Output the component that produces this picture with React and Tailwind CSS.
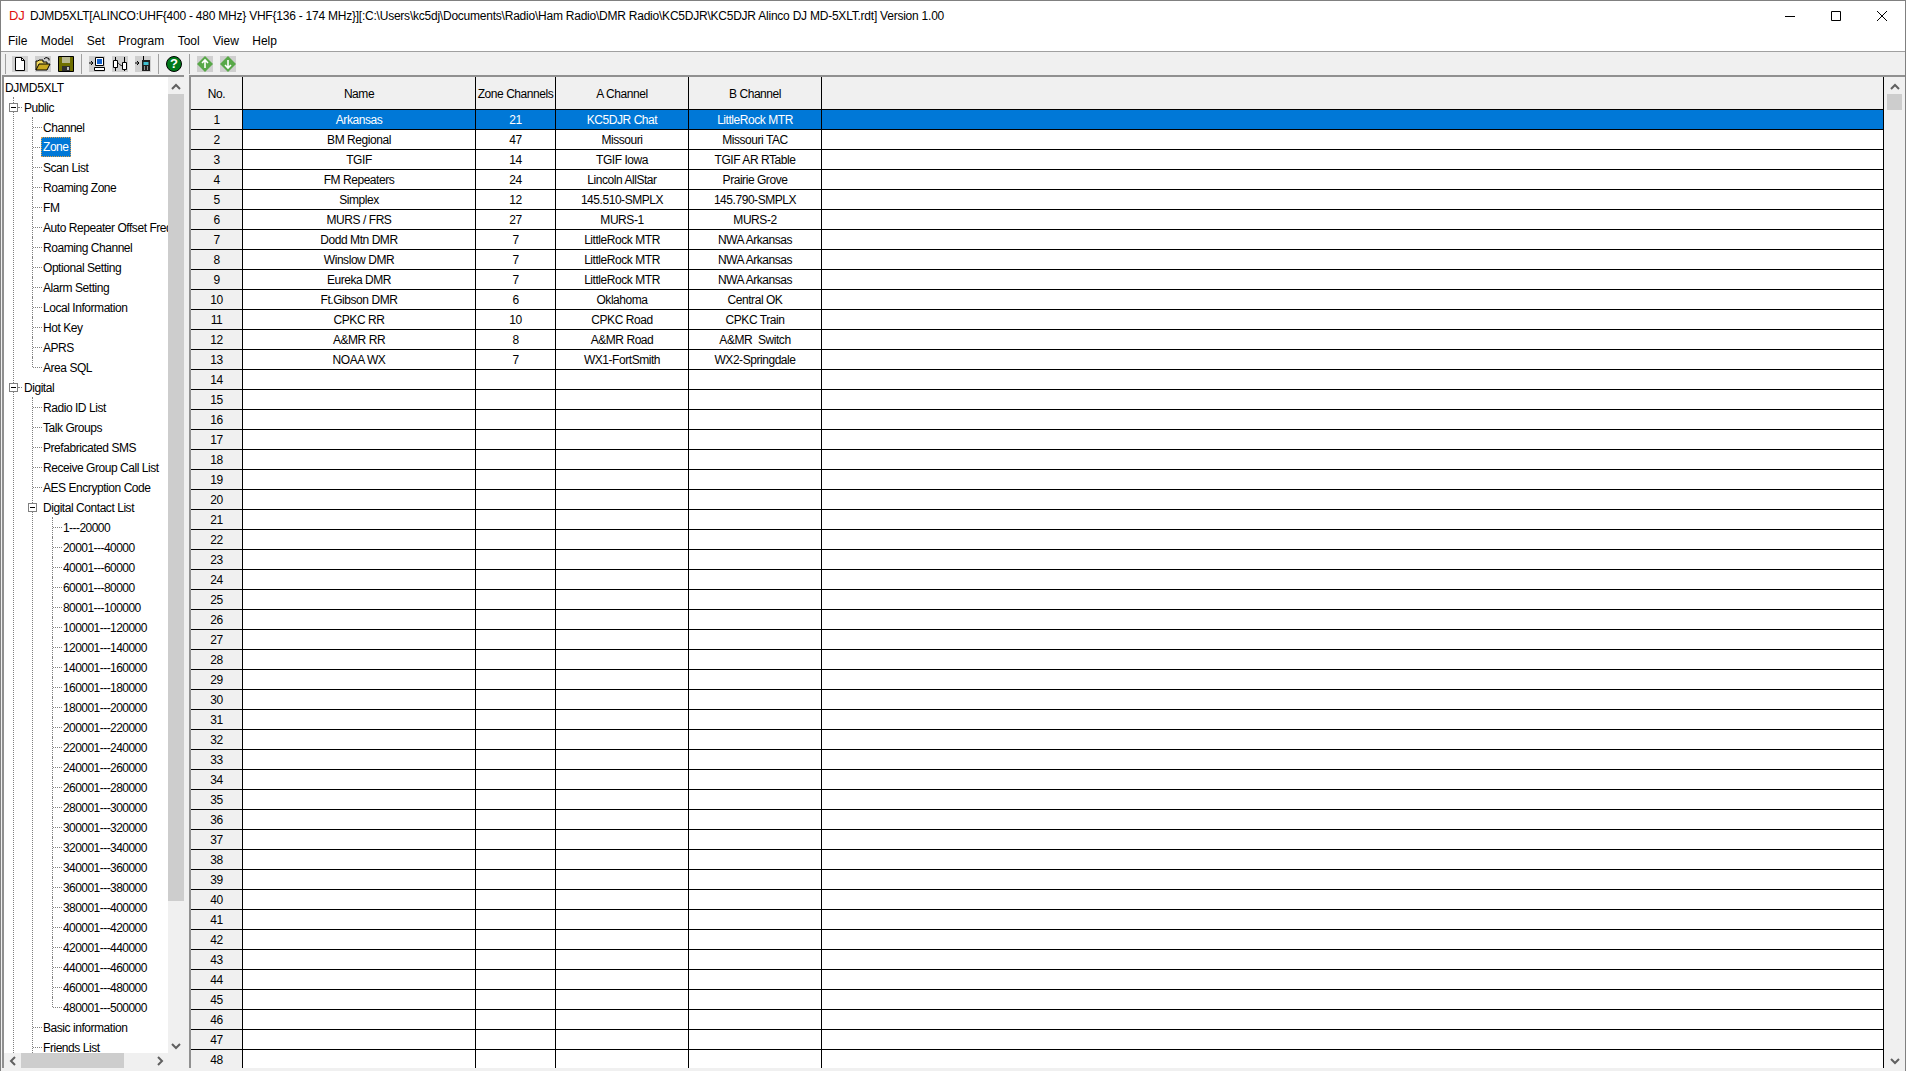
const zones = [
  ['Arkansas', '21', 'KC5DJR Chat', 'LittleRock MTR'],
  ['BM Regional', '47', 'Missouri', 'Missouri TAC'],
  ['TGIF', '14', 'TGIF Iowa', 'TGIF AR RTable'],
  ['FM Repeaters', '24', 'Lincoln AllStar', 'Prairie Grove'],
  ['Simplex', '12', '145.510-SMPLX', '145.790-SMPLX'],
  ['MURS / FRS', '27', 'MURS-1', 'MURS-2'],
  ['Dodd Mtn DMR', '7', 'LittleRock MTR', 'NWA Arkansas'],
  ['Winslow DMR', '7', 'LittleRock MTR', 'NWA Arkansas'],
  ['Eureka DMR', '7', 'LittleRock MTR', 'NWA Arkansas'],
  ['Ft.Gibson DMR', '6', 'Oklahoma', 'Central OK'],
  ['CPKC RR', '10', 'CPKC Road', 'CPKC Train'],
  ['A&MR RR', '8', 'A&MR Road', 'A&MR  Switch'],
  ['NOAA WX', '7', 'WX1-FortSmith', 'WX2-Springdale'],
]

const rows = Array.from({ length: 48 }, (_, i) => zones[i] || ['', '', '', ''])

const publicItems = ['Channel', 'Zone', 'Scan List', 'Roaming Zone', 'FM', 'Auto Repeater Offset Freq', 'Roaming Channel', 'Optional Setting', 'Alarm Setting', 'Local Information', 'Hot Key', 'APRS', 'Area SQL']
const digitalItems = ['Radio ID List', 'Talk Groups', 'Prefabricated SMS', 'Receive Group Call List', 'AES Encryption Code']
const contactRanges = ['1---20000', '20001---40000', '40001---60000', '60001---80000', '80001---100000', '100001---120000', '120001---140000', '140001---160000', '160001---180000', '180001---200000', '200001---220000', '220001---240000', '240001---260000', '260001---280000', '280001---300000', '300001---320000', '320001---340000', '340001---360000', '360001---380000', '380001---400000', '400001---420000', '420001---440000', '440001---460000', '460001---480000', '480001---500000']

const Expander = () => (
  <span className="w-[9px] h-[9px] border border-[#808080] bg-white flex items-center justify-center shrink-0">
    <span className="w-[5px] h-px bg-black" />
  </span>
)

// line: the leaf draws its own bit of the vertical tree line, last = only down to the middle
const Leaf = ({ label, selected, line, last, tight }) => (
  <div className="h-5 flex items-center whitespace-nowrap">
    {line && <span className={`w-0 border-l border-dotted border-[#808080] self-start shrink-0 ${last ? 'h-[10px]' : 'h-5'}`} />}
    <span className="w-[9px] border-t border-dotted border-[#808080] mr-px shrink-0" />
    {selected
      ? <span className="bg-[#0078d7] text-white px-[2px] pt-px -ml-[2px] h-5 leading-[19px] outline-1 -outline-offset-1 outline-dotted outline-[#d9a050]">{label}</span>
      : <span className={`pt-px ${tight ? 'tracking-[-0.55px]' : ''}`}>{label}</span>}
  </div>
)

const Chevron = ({ dir }) => {
  const pts = { up: '1,7 5,3 9,7', down: '1,3 5,7 9,3', left: '7,1 3,5 7,9', right: '3,1 7,5 3,9' }
  return (
    <svg width="10" height="10" viewBox="0 0 10 10" className={dir === 'up' || dir === 'down' ? 'mt-0.5' : ''}>
      <polyline points={pts[dir]} fill="none" stroke="#606060" strokeWidth="2" />
    </svg>
  )
}

const Sep = () => <span className="w-px h-[20px] bg-[#a0a0a0] mr-[7px] shrink-0" />

const ToolBtn = ({ children }) => (
  <span className="w-4 h-4 mr-[7px] flex items-center justify-center shrink-0 bg-[#cfcfcf]">{children}</span>
)

const NewIcon = () => (
  <svg width="16" height="16" viewBox="0 0 16 16"><path d="M3.5 1.5h6l3 3v10h-9z" fill="#fff" stroke="#000" /><path d="M9.5 1.5v3h3" fill="none" stroke="#000" /></svg>
)
const OpenIcon = () => (
  <svg width="16" height="16" viewBox="0 0 16 16"><path d="M1 14V5h2l1-1h4v2h4v2" fill="#f0d860" stroke="#000" /><path d="M1 14l3-6h11l-3 6z" fill="#c8a820" stroke="#000" /><path d="M9 3l2-1.5 3 1v2" fill="none" stroke="#000" /></svg>
)
const SaveIcon = () => (
  <svg width="16" height="16" viewBox="0 0 16 16"><path d="M.5.5h15v15H.5z" fill="#707000" stroke="#000" /><path d="M4 1h8v6H4z" fill="#b8b890" /><path d="M4 10h8v5H4z" fill="#303030" /><path d="M9 11h2v3H9z" fill="#c0c0c0" /></svg>
)
const ReadIcon = () => (
  <svg width="16" height="16" viewBox="0 0 16 16"><path d="M0 7h3M2 5l2 2-2 2" fill="none" stroke="#000" /><path d="M6.5 1.5h8v8h-8z" fill="#fff" stroke="#000" /><path d="M8 3h5v5H8z" fill="#1060d0" /><path d="M5.5 11.5h10v3h-10z" fill="#fff" stroke="#000" /></svg>
)
const LinkIcon = () => (
  <svg width="16" height="16" viewBox="0 0 16 16"><path d="M1.5 4.5h4v7h-4zM10.5 6.5h4v7h-4z" fill="#fff" stroke="#000" /><path d="M3.5 1v3M3.5 11v4M12.5 1v5M12.5 13v2M5.5 7c2 0 3 4 5 2" fill="none" stroke="#000" /></svg>
)
const RadioIcon = () => (
  <svg width="16" height="16" viewBox="0 0 16 16"><path d="M0 7h3M2 5l2 2-2 2" fill="none" stroke="#000" /><path d="M8.5 0v4" stroke="#000" /><path d="M7 4h8v11H7z" fill="#202020" /><path d="M8.5 6h5v3h-5z" fill="#40c0d0" /><path d="M9 11h1M12 11h1M9 13h1M12 13h1" stroke="#fff" /></svg>
)
const HelpIcon = () => (
  <span className="w-4 h-4 rounded-full bg-[#007a1a] border border-black text-white text-[13px] leading-[14px] font-bold text-center tracking-normal">?</span>
)
const ArrowIcon = ({ d }) => (
  <svg width="16" height="16" viewBox="0 0 16 16">
    <path d="M8 0l8 8-8 8-8-8z" fill="#58a848" />
    <path d={d} fill="none" stroke="#fff" strokeWidth="1.6" />
  </svg>
)

const Cell = ({ w, children, className = '' }) => (
  <div className={`${w} shrink-0 h-full pt-px border-r border-black flex items-center justify-center whitespace-pre ${className}`}>{children}</div>
)

export default function App() {
  return (
    <div className="w-[1906px] h-[1071px] overflow-hidden bg-[#f0f0f0] flex flex-col text-[12px] text-black font-['Liberation_Sans',sans-serif] tracking-[-0.45px] border-x border-t border-[#808080]">
      {/* title bar */}
      <div className="h-[30px] bg-white flex items-center shrink-0 tracking-[-0.23px]">
        <span className="ml-[8px] w-[21px] text-[#e01010] text-[13px]">DJ</span>
        <span className="whitespace-nowrap">DJMD5XLT[ALINCO:UHF{'{'}400 - 480 MHz{'}'} VHF{'{'}136 - 174 MHz{'}'}][:C:\Users\kc5dj\Documents\Radio\Ham Radio\DMR Radio\KC5DJR\KC5DJR Alinco DJ MD-5XLT.rdt] Version 1.00</span>
        <div className="ml-auto flex items-center">
          <span className="w-[46px] flex justify-center"><svg width="10" height="10" viewBox="0 0 10 10"><path d="M0 5.5h10" stroke="#000" /></svg></span>
          <span className="w-[46px] flex justify-center"><svg width="10" height="10" viewBox="0 0 10 10"><path d="M.5.5h9v9h-9z" fill="none" stroke="#000" /></svg></span>
          <span className="w-[46px] flex justify-center"><svg width="10" height="10" viewBox="0 0 10 10"><path d="M0 0l10 10M10 0L0 10" stroke="#000" /></svg></span>
        </div>
      </div>
      {/* menu */}
      <div className="h-[21px] bg-white flex items-center gap-[13.4px] pl-[7px] shrink-0 border-b border-[#a0a0a0] tracking-normal">
        {['File', 'Model', 'Set', 'Program', 'Tool', 'View', 'Help'].map((m) => <span key={m}>{m}</span>)}
      </div>
      {/* toolbar */}
      <div className="h-[23px] flex items-center pl-[4px] pt-px shrink-0">
        <span className="w-px h-[20px] bg-[#a0a0a0] mr-[6px]" />
        <ToolBtn><NewIcon /></ToolBtn>
        <ToolBtn><OpenIcon /></ToolBtn>
        <ToolBtn><SaveIcon /></ToolBtn>
        <Sep />
        <ToolBtn><ReadIcon /></ToolBtn>
        <ToolBtn><LinkIcon /></ToolBtn>
        <ToolBtn><RadioIcon /></ToolBtn>
        <Sep />
        <span className="mr-[7px] flex"><HelpIcon /></span>
        <Sep />
        <ToolBtn><ArrowIcon d="M8 12V4M5 7l3-3 3 3" /></ToolBtn>
        <ToolBtn><ArrowIcon d="M8 4v8M5 9l3 3 3-3" /></ToolBtn>
      </div>
      <div className="flex-1 min-h-0 flex pb-[3px]">
        {/* tree */}
        <div className="w-[182px] shrink-0 ml-px border-l-2 border-t-2 border-[#909090] flex flex-col bg-white">
          <div className="flex-1 min-h-0 flex">
            <div className="flex-1 min-w-0 overflow-hidden pl-px">
              <div className="h-5 pt-px flex items-center tracking-[-0.3px]">DJMD5XLT</div>
              <div className="ml-[8px] border-l border-dotted border-[#808080]">
                <div className="h-5 flex items-center -ml-[5px]"><Expander /><span className="w-[4px] border-t border-dotted border-[#808080] mr-[2px]" /><span className="pt-px">Public</span></div>
                <div className="ml-[18px]">
                  {publicItems.map((t, i) => <Leaf key={t} label={t} line last={i === publicItems.length - 1} selected={t === 'Zone'} />)}
                </div>
                <div className="h-5 flex items-center -ml-[5px]"><Expander /><span className="w-[4px] border-t border-dotted border-[#808080] mr-[2px]" /><span className="pt-px">Digital</span></div>
                <div className="ml-[18px] border-l border-dotted border-[#808080]">
                  {digitalItems.map((t) => <Leaf key={t} label={t} />)}
                  <div className="h-5 flex items-center -ml-[5px]"><Expander /><span className="ml-[6px] pt-px whitespace-nowrap">Digital Contact List</span></div>
                  <div className="ml-[19px]">
                    {contactRanges.map((t, i) => <Leaf key={t} label={t} line tight last={i === contactRanges.length - 1} />)}
                  </div>
                  <Leaf label="Basic information" />
                  <Leaf label="Friends List" />
                </div>
              </div>
            </div>
            <div className="w-4 shrink-0 bg-[#f0f0f0] flex flex-col items-center">
              <span className="h-[17px] flex items-center shrink-0"><Chevron dir="up" /></span>
              <div className="flex-1 min-h-0 w-full"><div className="h-[807px] w-full bg-[#cdcdcd]" /></div>
              <span className="h-[17px] flex items-center shrink-0"><Chevron dir="down" /></span>
            </div>
          </div>
          <div className="h-[15px] shrink-0 bg-[#f0f0f0] flex items-center">
            <span className="w-[17px] flex justify-center"><Chevron dir="left" /></span>
            <div className="flex-1 h-full"><div className="w-[103px] h-full bg-[#cdcdcd]" /></div>
            <span className="w-[17px] flex justify-center"><Chevron dir="right" /></span>
            <span className="w-4 shrink-0" />
          </div>
        </div>
        {/* grid */}
        <div className="flex-1 min-w-0 ml-[5px] border-l-2 border-t-2 border-[#909090] flex bg-white">
          <div className="flex-1 min-w-0 overflow-hidden border-r border-black">
            <div className="h-[33px] bg-[#f0f0f0] border-b border-black flex">
              <Cell w="w-[52px]">No.</Cell>
              <Cell w="w-[233px]">Name</Cell>
              <Cell w="w-[80px]">Zone Channels</Cell>
              <Cell w="w-[133px]">A Channel</Cell>
              <Cell w="w-[133px]">B Channel</Cell>
            </div>
            {rows.map((r, i) => (
              <div key={i} className="h-5 border-b border-black flex">
                <Cell w="w-[52px]" className="bg-[#f0f0f0]">{i + 1}</Cell>
                <div className={`flex flex-1 h-full ${i === 0 ? 'bg-[#0078d7] text-white' : ''}`}>
                  <Cell w="w-[233px]">{r[0]}</Cell>
                  <Cell w="w-[80px]">{r[1]}</Cell>
                  <Cell w="w-[133px]">{r[2]}</Cell>
                  <Cell w="w-[133px]">{r[3]}</Cell>
                </div>
              </div>
            ))}
          </div>
          <div className="w-[21px] shrink-0 bg-[#f0f0f0] flex flex-col items-center">
            <span className="h-[17px] flex items-center"><Chevron dir="up" /></span>
            <div className="flex-1 w-full px-[3px]"><div className="h-4 bg-[#cdcdcd]" /></div>
            <span className="h-[17px] flex items-center"><Chevron dir="down" /></span>
          </div>
        </div>
      </div>
    </div>
  )
}
